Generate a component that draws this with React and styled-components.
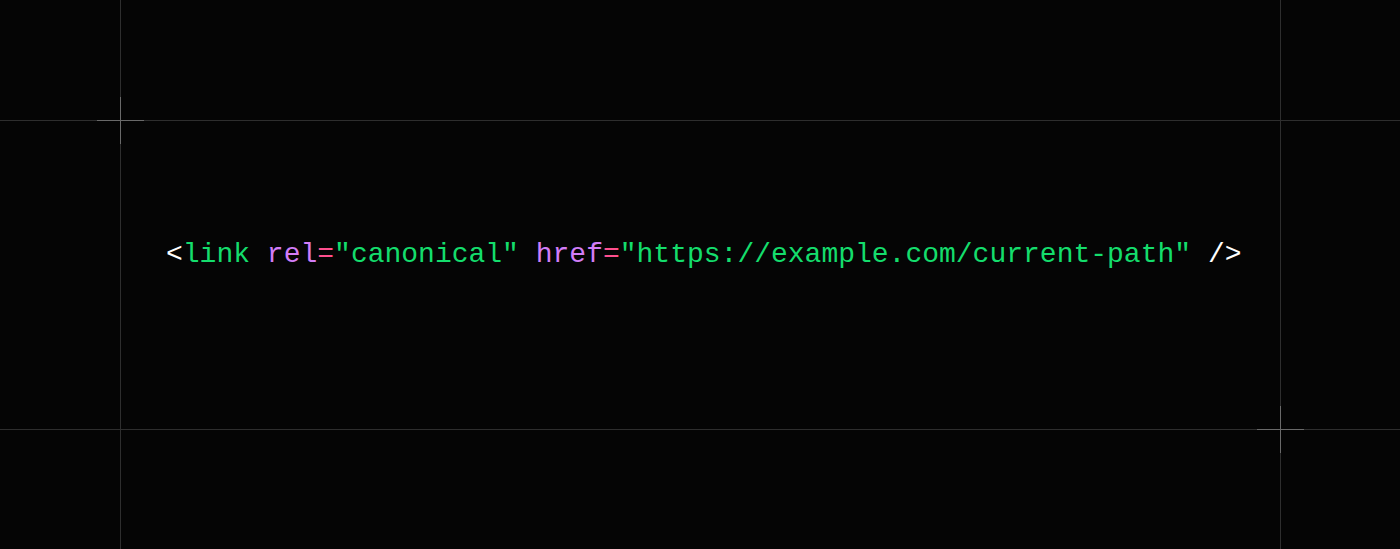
import React from 'react';
import styled, { createGlobalStyle } from 'styled-components';

const GlobalStyle = createGlobalStyle`
  html, body {
    margin: 0;
    padding: 0;
    background: #050505;
  }
`;

const Frame = styled.div`
  position: relative;
  width: 1400px;
  height: 549px;
  display: grid;
  grid-template-columns: 120px 1161px 1fr;
  grid-template-rows: 120px 310px 1fr;
  background: #050505;
  overflow: hidden;
`;

const RowBand = styled.div`
  grid-column: 1 / -1;
  grid-row: 2;
  border-top: 1px solid #2e2e2e;
  border-bottom: 1px solid #2e2e2e;
`;

const ColumnBand = styled.div`
  grid-column: 2;
  grid-row: 1 / -1;
  border-left: 1px solid #2e2e2e;
  border-right: 1px solid #2e2e2e;
`;

const Cross = styled.div`
  position: absolute;
  left: ${props => props.x - 23}px;
  top: ${props => props.y - 23}px;
  width: 47px;
  height: 47px;

  &::before,
  &::after {
    content: '';
    position: absolute;
    background: #6a6a6a;
  }
  &::before {
    left: 0;
    top: 23px;
    width: 47px;
    height: 1px;
  }
  &::after {
    left: 23px;
    top: 0;
    width: 1px;
    height: 47px;
  }
`;

const Stage = styled.div`
  grid-column: 2;
  grid-row: 2;
  padding: 115px 0 0 46px;
  position: relative;
  z-index: 1;
`;

const Code = styled.code`
  display: block;
  font-family: 'Liberation Mono', 'DejaVu Sans Mono', monospace;
  font-size: 28px;
  line-height: 40px;
  white-space: pre;
  color: #ffffff;
`;

const Token = styled.span`
  color: ${props =>
    props.kind === 'tag'
      ? '#14dd6c'
      : props.kind === 'attr'
      ? '#d27df7'
      : props.kind === 'eq'
      ? '#ff4f8e'
      : props.kind === 'str'
      ? '#14dd6c'
      : '#ffffff'};
`;

export default function App() {
  return (
    <>
      <GlobalStyle />
      <Frame>
        <RowBand />
        <ColumnBand />
        <Cross x={120} y={120} />
        <Cross x={1280} y={429} />
        <Stage>
          <Code>
            <Token>&lt;</Token>
            <Token kind="tag">link</Token>{' '}
            <Token kind="attr">rel</Token>
            <Token kind="eq">=</Token>
            <Token kind="str">"canonical"</Token>{' '}
            <Token kind="attr">href</Token>
            <Token kind="eq">=</Token>
            <Token kind="str">"https://example.com/current-path"</Token>{' '}
            <Token>/&gt;</Token>
          </Code>
        </Stage>
      </Frame>
    </>
  );
}
